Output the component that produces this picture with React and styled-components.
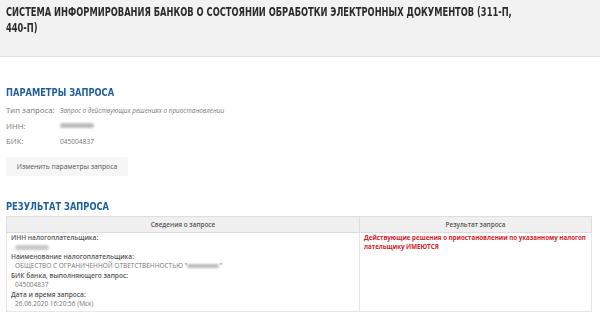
import React from 'react';
import styled, { createGlobalStyle } from 'styled-components';

const GlobalStyle = createGlobalStyle`
  html, body {
    margin: 0;
    padding: 0;
    background: #fff;
  }
  body {
    font-family: "Open Sans", "Liberation Sans", sans-serif;
    color: #555;
    width: 600px;
    overflow: hidden;
  }
`;

const params = [
  { label: 'Тип запроса:', value: 'Запрос о действующих решениях о приостановлении', italic: true },
  { label: 'ИНН:', hidden: true },
  { label: 'БИК:', value: '045004837' },
];

const App = () => (
  <>
    <GlobalStyle />
    <Header>
      <Title>
        Система информирования банков о состоянии обработки электронных документов (311-П, 440-П)
      </Title>
    </Header>
    <Main>
      <SectionTitle>Параметры запроса</SectionTitle>
      <ParamList>
        {params.map((p) => (
          <ParamRow key={p.label}>
            <ParamLabel>{p.label}</ParamLabel>
            {p.hidden ? (
              <Blur $width={34} />
            ) : (
              <ParamValue $italic={p.italic}>{p.value}</ParamValue>
            )}
          </ParamRow>
        ))}
      </ParamList>
      <ChangeButton>Изменить параметры запроса</ChangeButton>

      <SectionTitle $top={24}>Результат запроса</SectionTitle>
      <ResultTable>
        <thead>
          <tr>
            <Th $width={352}>Сведения о запросе</Th>
            <Th>Результат запроса</Th>
          </tr>
        </thead>
        <tbody>
          <tr>
            <Td>
              <FieldLabel>ИНН налогоплательщика:</FieldLabel>
              <FieldValue>
                <Blur $width={34} $light />
              </FieldValue>
              <FieldLabel>Наименование налогоплательщика:</FieldLabel>
              <FieldValue>
                ОБЩЕСТВО С ОГРАНИЧЕННОЙ ОТВЕТСТВЕННОСТЬЮ "<Blur $width={32} $inline />"
              </FieldValue>
              <FieldLabel>БИК банка, выполняющего запрос:</FieldLabel>
              <FieldValue>045004837</FieldValue>
              <FieldLabel>Дата и время запроса:</FieldLabel>
              <FieldValue>26.06.2020 16:20:56 (Мск)</FieldValue>
            </Td>
            <Td>
              <ResultText>
                Действующие решения о приостановлении по указанному налогоплательщику ИМЕЮТСЯ
              </ResultText>
            </Td>
          </tr>
        </tbody>
      </ResultTable>
    </Main>
  </>
);

const Header = styled.header`
  background: #f2f2f2;
  border-bottom: 1px solid #e2e2e2;
  height: 57px;
  padding: 4px 6px 0;
  box-sizing: border-box;
`;

const Title = styled.h1`
  margin: 0;
  width: 660px;
  font-family: "DejaVu Sans Condensed", "DejaVu Sans", sans-serif;
  font-stretch: condensed;
  font-weight: bold;
  font-size: 12px;
  line-height: 16px;
  text-transform: uppercase;
  color: #2b2b2b;
  transform: scaleX(0.77);
  transform-origin: left top;
`;

const Main = styled.main`
  padding: 29px 6px 0;
`;

const SectionTitle = styled.h2`
  margin: ${(p) => p.$top || 0}px 0 0;
  width: 200px;
  font-family: "DejaVu Sans Condensed", "DejaVu Sans", sans-serif;
  font-stretch: condensed;
  font-weight: bold;
  font-size: 11px;
  line-height: 13px;
  text-transform: uppercase;
  color: #1f5f9e;
  transform: scaleX(0.84);
  transform-origin: left top;
`;

const ParamList = styled.div`
  display: flex;
  flex-direction: column;
  gap: 5px;
  margin-top: 6px;
`;

const ParamRow = styled.div`
  display: flex;
  align-items: center;
  height: 10.5px;
`;

const ParamLabel = styled.span`
  width: 54px;
  font-size: 7.8px;
  color: #777;
`;

const ParamValue = styled.span`
  font-size: ${(p) => (p.$italic ? 6.4 : 6.6)}px;
  color: #777;
  font-style: ${(p) => (p.$italic ? 'italic' : 'normal')};
`;

const Blur = styled.span`
  display: inline-block;
  width: ${(p) => p.$width}px;
  height: ${(p) => (p.$inline ? 4 : 5)}px;
  border-radius: 3px;
  background: ${(p) => (p.$light ? '#c8c8c8' : '#bdbdbd')};
  filter: blur(1px);
  vertical-align: middle;
`;

const ChangeButton = styled.button`
  display: block;
  margin-top: 10px;
  width: 122px;
  height: 19px;
  border: none;
  border-radius: 2px;
  background: #f6f6f6;
  font-family: "Open Sans", "Liberation Sans", sans-serif;
  font-size: 6.8px;
  color: #555;
  padding: 0;
`;

const ResultTable = styled.table`
  margin-top: 3px;
  width: 586px;
  border-collapse: collapse;
  font-size: 7px;
`;

const Th = styled.th`
  width: ${(p) => (p.$width ? `${p.$width}px` : 'auto')};
  height: 15px;
  padding: 0;
  background: #f0f0f0;
  border: 1px solid #dedede;
  font-weight: 600;
  font-size: 6.4px;
  color: #555;
  text-align: center;
`;

const Td = styled.td`
  vertical-align: top;
  border: 1px solid #e6e6e6;
  padding: 0 4px 2px;
`;

const FieldLabel = styled.div`
  font-weight: 600;
  font-size: 6.6px;
  color: #555;
  line-height: 9.5px;
`;

const FieldValue = styled.div`
  padding-left: 4px;
  font-size: 6.5px;
  color: #777;
  line-height: 9.5px;
`;

const ResultText = styled.div`
  font-weight: 700;
  font-size: 6.2px;
  color: #d2232a;
  line-height: 9.5px;
  word-break: break-all;
`;

export default App;
